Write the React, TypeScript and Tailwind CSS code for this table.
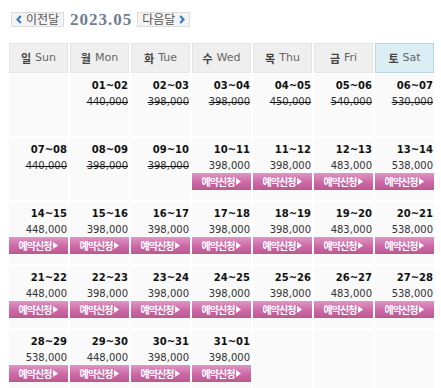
import React from "react"

type Cell = { d: string; p: string; off?: boolean; book?: boolean } | null

const weeks: Cell[][] = [
    [
        null,
        { d: "01~02", p: "440,000", off: true },
        { d: "02~03", p: "398,000", off: true },
        { d: "03~04", p: "398,000", off: true },
        { d: "04~05", p: "450,000", off: true },
        { d: "05~06", p: "540,000", off: true },
        { d: "06~07", p: "530,000", off: true },
    ],
    [
        { d: "07~08", p: "440,000", off: true },
        { d: "08~09", p: "398,000", off: true },
        { d: "09~10", p: "398,000", off: true },
        { d: "10~11", p: "398,000", book: true },
        { d: "11~12", p: "398,000", book: true },
        { d: "12~13", p: "483,000", book: true },
        { d: "13~14", p: "538,000", book: true },
    ],
    [
        { d: "14~15", p: "448,000", book: true },
        { d: "15~16", p: "398,000", book: true },
        { d: "16~17", p: "398,000", book: true },
        { d: "17~18", p: "398,000", book: true },
        { d: "18~19", p: "398,000", book: true },
        { d: "19~20", p: "483,000", book: true },
        { d: "20~21", p: "538,000", book: true },
    ],
    [
        { d: "21~22", p: "448,000", book: true },
        { d: "22~23", p: "398,000", book: true },
        { d: "23~24", p: "398,000", book: true },
        { d: "24~25", p: "398,000", book: true },
        { d: "25~26", p: "398,000", book: true },
        { d: "26~27", p: "483,000", book: true },
        { d: "27~28", p: "538,000", book: true },
    ],
    [
        { d: "28~29", p: "538,000", book: true },
        { d: "29~30", p: "448,000", book: true },
        { d: "30~31", p: "398,000", book: true },
        { d: "31~01", p: "398,000", book: true },
        null,
        null,
        null,
    ],
]

const days = [
    ["일", "Sun"],
    ["월", "Mon"],
    ["화", "Tue"],
    ["수", "Wed"],
    ["목", "Thu"],
    ["금", "Fri"],
    ["토", "Sat"],
]

function Chevron({ dir }: { dir: "l" | "r" }) {
    return (
        <svg width="6" height="9" viewBox="0 0 6 9" className="shrink-0">
            <path
                d={dir === "l" ? "M4.8 1 L1.5 4.5 L4.8 8" : "M1.2 1 L4.5 4.5 L1.2 8"}
                fill="none"
                stroke="#2f78c8"
                strokeWidth="2"
            />
        </svg>
    )
}

function NavButton({ label, dir }: { label: string; dir: "l" | "r" }) {
    return (
        <div className="flex h-[15px] w-[53px] items-center justify-center gap-[4px] border border-[#dcdcdc] bg-[#f4f4f4] text-[12px] leading-none text-[#555]">
            {dir === "l" && <Chevron dir="l" />}
            <span>{label}</span>
            {dir === "r" && <Chevron dir="r" />}
        </div>
    )
}

function DayCell({ cell }: { cell: Cell }) {
    if (!cell) return <div className="h-[62px] bg-[#fafafa]" />
    return (
        <div className="flex h-[62px] flex-col bg-[#fafafa] pt-[5px]">
            <div className="h-[13px] pr-[1px] text-right text-[10px] font-bold leading-[13px] text-[#111]">
                {cell.d}
            </div>
            <div
                className={
                    "mt-[3px] h-[13px] pr-[1px] text-right text-[10px] leading-[13px] text-[#333] " +
                    (cell.off ? "line-through decoration-[#111]" : "")
                }
            >
                {cell.p}
            </div>
            {cell.book && (
                <div className="mt-[1px] flex h-[17px] items-center justify-center gap-[2px] bg-linear-to-b from-[#de97c5] via-[#cd6ba8] to-[#bd5791] font-['Noto_Sans_CJK_KR',sans-serif] text-[10px] font-bold leading-none tracking-[-1px] text-white">
                    <span>예약신청</span>
                    <svg width="5" height="7" viewBox="0 0 5 7">
                        <path d="M0 0 L5 3.5 L0 7 Z" fill="#fff" />
                    </svg>
                </div>
            )}
        </div>
    )
}

export default function App() {
    return (
        <div className="h-[388px] w-[441px] bg-white pl-[9px] pt-[11px] font-['DejaVu_Sans','Noto_Sans_CJK_KR',sans-serif]">
            <div className="flex items-center pl-[2px]">
                <NavButton label="이전달" dir="l" />
                <span className="ml-[6px] font-['Liberation_Serif',serif] text-[17px] font-bold leading-none tracking-[1px] text-[#6f7e8f]">
                    2023.05
                </span>
                <div className="ml-[5px]">
                    <NavButton label="다음달" dir="r" />
                </div>
            </div>

            <div className="mt-[15px] grid w-[425px] grid-cols-7 gap-[2px]">
                {days.map(([ko, en], i) => (
                    <div
                        key={en}
                        className={
                            "flex h-[30px] items-center justify-center gap-[4px] border text-[11px] " +
                            (i === 6
                                ? "border-[#b9d7e6] bg-[#dbeef4]"
                                : "border-[#e4e4e4] bg-[#efefef]")
                        }
                    >
                        <span className="font-['Noto_Sans_CJK_KR',sans-serif] font-bold text-[#444]">{ko}</span>
                        <span className="text-[#666]">{en}</span>
                    </div>
                ))}
            </div>

            <div className="mt-[1px] grid w-[425px] grid-cols-7 gap-[2px]">
                {weeks.flat().map((c, i) => (
                    <DayCell key={i} cell={c} />
                ))}
            </div>
        </div>
    )
}
